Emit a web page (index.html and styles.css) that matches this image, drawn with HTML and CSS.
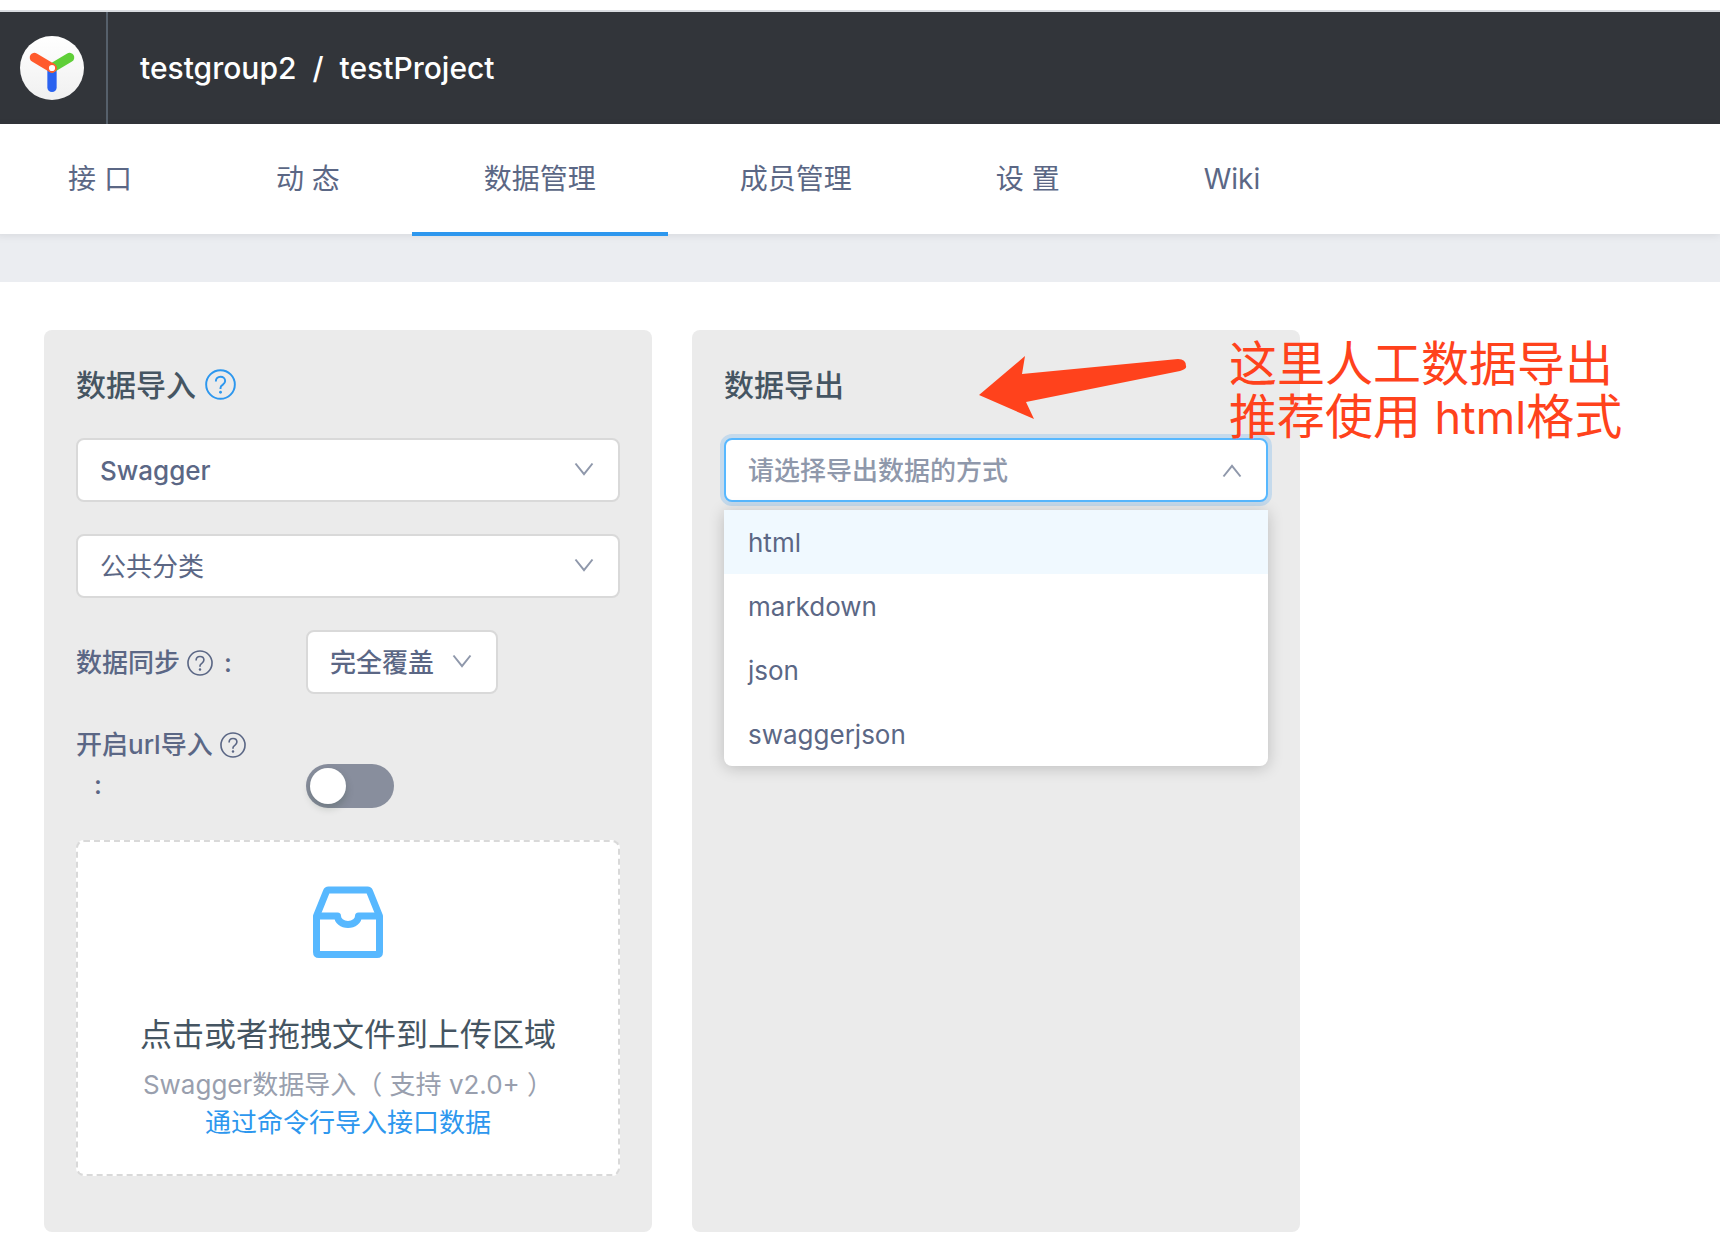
FILE: index.html
```html
<!DOCTYPE html>
<html lang="zh-CN">
<head>
  <meta charset="utf-8">
  <meta name="viewport" content="width=device-width, initial-scale=1">
  <title>数据管理 - testProject</title>
  <link rel="stylesheet" href="styles.css">
</head>
<body>
  <svg class="sprite" aria-hidden="true">
    <symbol id="icon-help" viewBox="0 0 32 32">
      <circle cx="16" cy="16" r="14.8" fill="none" stroke="currentColor" stroke-width="2"/>
      <path d="M11.2 12.8C11.2 10 13.200 8 16 8s4.800 1.900 4.800 4.400c0 2-1.200 3-2.600 4-1.400.9-2.200 1.600-2.200 3.100v1.100" fill="none" stroke="currentColor" stroke-width="2"/>
      <circle cx="16" cy="24" r="1.500" fill="currentColor"/>
    </symbol>
    <symbol id="icon-down" viewBox="0 0 20 14">
      <path d="M1.500 1.500 10 12.200 18.500 1.500" fill="none" stroke="currentColor" stroke-width="2"/>
    </symbol>
    <symbol id="icon-up" viewBox="0 0 20 14">
      <path d="M1.500 12.500 10 1.800l8.500 10.700" fill="none" stroke="currentColor" stroke-width="2"/>
    </symbol>
  </svg>

  <header class="topbar">
    <a class="logo" href="#" aria-label="YApi">
      <svg class="logo-mark" viewBox="0 0 64 64" aria-hidden="true">
        <defs>
          <linearGradient id="disc" x1="0" y1="0" x2="0" y2="1">
            <stop offset="0" stop-color="#fff"/>
            <stop offset="1" stop-color="#f0f0f0"/>
          </linearGradient>
        </defs>
        <circle cx="32" cy="32" r="32" fill="url(#disc)"/>
        <g fill="none" stroke-width="9.300" stroke-linecap="round">
          <path d="M32 32v19.400" stroke="#2a62f0"/>
          <path d="M32 32 49.600 21.500" stroke="#5fcf38"/>
          <path d="M32 32 14.400 21.500" stroke="#ff5a2c"/>
        </g>
        <circle cx="32" cy="32" r="3.900" fill="#fff" stroke="#ff5a2c" stroke-width="1.600"/>
      </svg>
    </a>
    <h1 class="breadcrumb"><a href="#">testgroup2</a><span>/</span><a href="#">testProject</a></h1>
  </header>

  <nav class="tabs">
    <a class="tab" href="#">接 口</a>
    <a class="tab" href="#">动 态</a>
    <a class="tab tab-active" href="#" aria-current="page">数据管理</a>
    <a class="tab" href="#">成员管理</a>
    <a class="tab" href="#">设 置</a>
    <a class="tab" href="#">Wiki</a>
  </nav>

  <main class="content">
    <section class="panel">
      <h2 class="panel-title">数据导入<svg class="help" aria-hidden="true"><use href="#icon-help"/></svg></h2>
      <div class="select">
        <select class="select-box strong" aria-label="导入方式"><option>Swagger</option></select>
        <svg class="arrow" aria-hidden="true"><use href="#icon-down"/></svg>
      </div>
      <div class="select">
        <select class="select-box" aria-label="分类"><option>公共分类</option></select>
        <svg class="arrow" aria-hidden="true"><use href="#icon-down"/></svg>
      </div>
      <div class="field">
        <label class="field-label" for="sync">数据同步<svg class="help" aria-hidden="true"><use href="#icon-help"/></svg><span class="colon">:</span></label>
        <div class="select">
          <select class="select-box strong" id="sync"><option>完全覆盖</option></select>
          <svg class="arrow" aria-hidden="true"><use href="#icon-down"/></svg>
        </div>
      </div>
      <div class="field field-switch">
        <label class="field-label" for="url-import">开启url导入<svg class="help" aria-hidden="true"><use href="#icon-help"/></svg> <span class="colon">:</span></label>
        <input class="switch" type="checkbox" role="switch" id="url-import">
      </div>
      <div class="upload">
        <svg class="upload-icon" viewBox="0 0 72 72" aria-hidden="true">
          <g fill="none" stroke="#57b8ff" stroke-width="7" stroke-linejoin="round">
            <path d="M4.500 30 14.400 5.500Q15 4 16.500 4h39q1.500 0 2.100 1.500L67.500 30v36q0 2.500-2.500 2.500H7q-2.500 0-2.500-2.500z"/>
            <path d="M4.500 30H25.500a10.500 8.500 0 0 0 21 0h21"/>
          </g>
        </svg>
        <p class="upload-title">点击或者拖拽文件到上传区域</p>
        <p class="upload-note">Swagger数据导入（ 支持 v2.0+ ）</p>
        <a class="upload-link" href="#">通过命令行导入接口数据</a>
      </div>
    </section>

    <section class="panel">
      <h2 class="panel-title">数据导出</h2>
      <div class="select select-open">
        <select class="select-box placeholder strong" aria-label="导出方式"><option>请选择导出数据的方式</option></select>
        <svg class="arrow" aria-hidden="true"><use href="#icon-up"/></svg>
        <div class="menu" role="listbox" aria-label="导出方式">
          <button class="option option-active" type="button" role="option" aria-selected="true">html</button>
          <button class="option" type="button" role="option">markdown</button>
          <button class="option" type="button" role="option">json</button>
          <button class="option" type="button" role="option">swaggerjson</button>
        </div>
      </div>
      <svg class="pointer" viewBox="0 0 208 64" aria-hidden="true">
        <path d="M0 39 46 0 43 18 199 3Q207 3 207 10 208 13 201 15L47 46 55 63z" fill="#ff421c"/>
      </svg>
      <p class="note">这里人工数据导出<br>推荐使用 <span class="note-latin">html</span>格式</p>
    </section>
  </main>
</body>
</html>
```
FILE: styles.css
```css
* {
  box-sizing: border-box;
}

body {
  margin: 0;
  border-top: 10px solid #fff;
  background: #fff;
  color: #5b6785;
  font: 26px/38px Inter, "Noto Sans CJK SC", sans-serif;
}

a {
  color: inherit;
  text-decoration: none;
}

h1,
h2,
p {
  margin: 0;
}

.sprite {
  display: none;
}

/* Header */
.topbar {
  display: flex;
  height: 114px;
  border-top: 2px solid #d9dce0;
  background: #32353a;
  color: #fff;
}

.logo {
  display: flex;
  align-items: center;
  padding: 0 22px 0 20px;
  border-right: 2px solid #56606b;
}

.logo-mark {
  width: 64px;
  height: 64px;
}

.breadcrumb {
  display: flex;
  align-items: center;
  gap: 16px;
  padding: 0 0 0 32px;
  font-size: 30px;
  font-weight: 500;
}

/* Tabs */
.tabs {
  display: flex;
  position: relative;
  height: 110px;
  margin-left: -4px;
  box-shadow: 0 2px 8px rgba(0, 0, 0, 0.08);
  font-size: 28px;
}

.tab {
  height: 112px;
  padding: 0 72px;
  line-height: 110px;
}

.tab-active {
  border-bottom: 4px solid #2d97ee;
}

/* Panels */
.content {
  display: flex;
  gap: 40px;
  padding: 48px 44px 16px;
  border-top: 48px solid #ebedf1;
}

.panel {
  position: relative;
  flex: 0 1 608px;
  display: flex;
  flex-direction: column;
  gap: 32px;
  padding: 32px 32px 56px;
  border-radius: 8px;
  background: #ebebeb;
}

.panel-title {
  display: flex;
  align-items: center;
  gap: 9px;
  height: 44px;
  padding-top: 1px;
  color: #455562;
  font-size: 30px;
  font-weight: 500;
}

.help {
  flex: none;
  width: 26px;
  height: 26px;
}

.panel-title .help {
  width: 31px;
  height: 31px;
  color: #2d97ee;
}

/* Select */
.select {
  position: relative;
}

.select-box {
  display: block;
  width: 100%;
  height: 64px;
  padding: 2px 22px 0;
  border: 2px solid #d9d9d9;
  border-radius: 8px;
  background: #fff;
  color: inherit;
  font: inherit;
  appearance: none;
}

.strong {
  font-weight: 500;
}

.placeholder {
  color: #8f98ab;
}

.select-open .select-box {
  border-color: #57b8ff;
  box-shadow: 0 0 0 4px rgba(45, 151, 238, 0.2);
}

.arrow {
  position: absolute;
  top: 24px;
  right: 26px;
  width: 20px;
  height: 14px;
  color: #8f98ab;
  pointer-events: none;
}

.select-open .arrow {
  top: 26px;
}

.menu {
  position: absolute;
  top: 72px;
  left: 0;
  width: 100%;
  overflow: hidden;
  border-radius: 0 0 8px 8px;
  background: #fff;
  box-shadow: 0 2px 16px rgba(0, 0, 0, 0.2);
}

.option {
  display: block;
  width: 100%;
  height: 64px;
  padding: 2px 24px 0;
  border: 0;
  background: none;
  color: inherit;
  font: inherit;
  text-align: left;
}

.option-active {
  background: #f0f9ff;
}

/* Fields */
.field {
  display: grid;
  grid-template-columns: 198px 192px;
  column-gap: 32px;
  align-items: center;
}

.field-label {
  display: flex;
  flex-wrap: wrap;
  align-items: center;
  column-gap: 7px;
  padding-top: 1px;
  font-weight: 500;
  line-height: 40px;
}

.colon {
  padding-left: 4px;
}

.field-switch {
  align-items: start;
  min-height: 84px;
  margin-top: -2px;
}

.field-switch .colon {
  width: 100%;
  padding-left: 18px;
}

.switch {
  align-self: end;
  width: 88px;
  height: 44px;
  margin: 0;
  padding: 4px;
  border-radius: 22px;
  background: #888e9d;
  appearance: none;
}

.switch::before {
  content: "";
  display: block;
  width: 36px;
  height: 36px;
  border-radius: 50%;
  background: #fff;
  box-shadow: 0 4px 8px rgba(0, 35, 11, 0.2);
}

/* Upload */
.upload {
  display: flex;
  flex-direction: column;
  align-items: center;
  padding: 44px 30px 32px;
  border: 2px dashed #d9d9d9;
  border-radius: 8px;
  background: #fff;
}

.upload-icon {
  width: 72px;
  height: 72px;
  margin-bottom: 54px;
}

.upload-title {
  margin-bottom: 8px;
  color: #455562;
  font-size: 32px;
  line-height: 46px;
}

.upload-note {
  color: #999fae;
}

.upload-link {
  color: #2d97ee;
}

/* Annotation */
.pointer {
  position: absolute;
  top: 26px;
  left: 287px;
  width: 208px;
  height: 64px;
}

.note {
  position: absolute;
  top: 7px;
  left: 537px;
  color: #ff421c;
  font-size: 48px;
  line-height: 53px;
  white-space: nowrap;
}

.note-latin {
  font-size: 45px;
}
```
